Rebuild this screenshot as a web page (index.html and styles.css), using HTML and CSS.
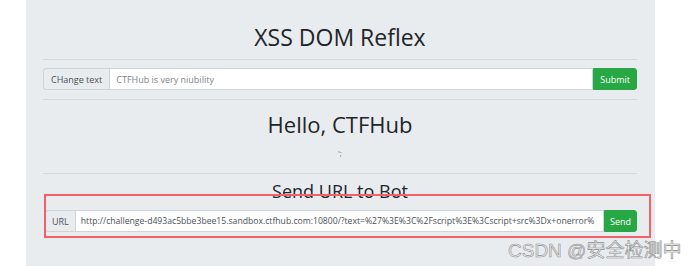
FILE: index.html
```html
<!DOCTYPE html>
<html lang="en">
  <head>
    <meta charset="UTF-8" />
    <meta name="viewport" content="width=device-width, initial-scale=1.0" />
    <title>XSS DOM Reflex</title>
    <link rel="stylesheet" href="styles.css">
  </head>
  <body>
    <div class="jumbo">
      <h1 class="title">XSS DOM Reflex</h1>
      <hr class="rule" />
      <form class="group">
        <span class="addon">CHange text</span>
        <input class="field" type="text" placeholder="CTFHub is very niubility" />
        <button class="btn" type="button">Submit</button>
      </form>
      <hr class="rule" />
      <h2 class="hello">Hello, CTFHub</h2>
      <p class="echo">';</p>
      <hr class="rule" />
      <h3 class="send">Send URL to Bot</h3>
      <form class="group url">
        <span class="addon">URL</span>
        <input class="field" type="text" value="http://challenge-d493ac5bbe3bee15.sandbox.ctfhub.com:10800/?text=%27%3E%3C%2Fscript%3E%3Cscript+src%3Dx+onerror%" />
        <button class="btn" type="button">Send</button>
      </form>
    </div>
    <div class="mark"></div>
    <div class="watermark">CSDN @安全检测中</div>
  </body>
</html>
```

FILE: styles.css
```css
body {
  margin: 0;
  padding: 0;
  background-color: #fff;
  font-family: "Open Sans", "Noto Sans", sans-serif;
  color: #212529;
}
.jumbo {
  box-sizing: border-box;
  margin-left: 26px;
  width: 629px;
  min-height: 266px;
  padding: 0 18px 0 17px;
  background-color: #e9ecef;
}
.title {
  margin: 0;
  padding-top: 23px;
  margin-bottom: 8px;
  font-size: 23px;
  font-weight: 400;
  line-height: 28px;
  text-align: center;
}
.rule {
  margin: 0;
  border: 0;
  border-top: 1px solid #d5d9dd;
}
.group {
  display: flex;
  height: 22px;
  margin: 8px 0 9px;
  font-size: 9px;
}
.addon {
  display: flex;
  align-items: center;
  padding: 0 7px;
  border: 1px solid #ced4da;
  border-right: 0;
  border-radius: 3px 0 0 3px;
  background-color: #e9ecef;
  color: #495057;
}
.field {
  flex: 1;
  min-width: 0;
  margin: 0;
  padding: 0 6px;
  border: 1px solid #ced4da;
  border-radius: 0;
  background-color: #fff;
  font-family: inherit;
  font-size: 9px;
  color: #495057;
  outline: none;
}
.field::placeholder {
  color: #7d858c;
}
.btn {
  margin: 0;
  padding: 0 6px;
  border: 1px solid #28a745;
  border-radius: 0 3px 3px 0;
  background-color: #28a745;
  color: #fff;
  font-family: inherit;
  font-size: 9px;
}
.hello {
  margin: 10px 0 0;
  font-size: 22px;
  font-weight: 400;
  line-height: 28px;
  text-align: center;
}
.echo {
  margin: 10px 0 15px;
  font-size: 8px;
  line-height: 10px;
  text-align: center;
  color: #6c757d;
}
.send {
  margin: 5px 0 0;
  font-size: 18px;
  font-weight: 400;
  line-height: 24px;
  text-align: center;
}
.url {
  margin: 7px 0 0 2px;
}
.url .addon {
  padding: 0 6px;
}
.url .field {
  padding: 0 5px;
  font-size: 8.65px;
}
.url .btn {
  padding: 0 5px;
}
.mark {
  position: absolute;
  left: 44px;
  top: 194px;
  width: 603px;
  height: 40px;
  border: 2px solid #f0616a;
}
.watermark {
  position: absolute;
  left: 508px;
  top: 235px;
  font-family: "Liberation Sans", "Noto Sans CJK SC", sans-serif;
  font-size: 19px;
  color: #f2f2f2;
  -webkit-text-stroke: 0.6px #8f8f8f;
}
```
